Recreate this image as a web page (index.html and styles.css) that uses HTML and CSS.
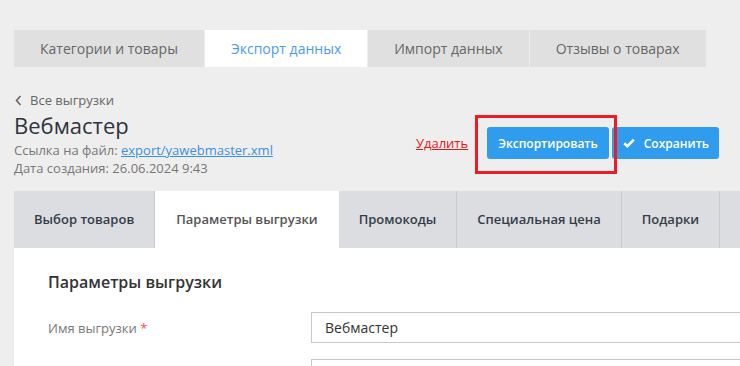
FILE: index.html
```html
<!DOCTYPE html>
<html lang="ru">
	<head>
		<title>Вебмастер - Экспорт данных</title>
		<meta charset="utf-8">
		<link rel="stylesheet" href="styles.css">
	</head>
	<body>
	<div class="page">
		<nav class="top-tabs">
			<a class="top-tab">Категории и товары</a>
			<a class="top-tab active">Экспорт данных</a>
			<a class="top-tab">Импорт данных</a>
			<a class="top-tab">Отзывы о товарах</a>
		</nav>

		<div class="head">
			<div class="head-info">
				<a class="back-link">
					<svg width="7" height="11" viewBox="0 0 7 11"><path d="M5.5 1 L1.5 5.5 L5.5 10" fill="none" stroke="#666" stroke-width="1.6"/></svg>
					Все выгрузки
				</a>
				<h1>Вебмастер</h1>
				<p class="meta">Ссылка на файл: <a class="file-link">export/yawebmaster.xml</a></p>
				<p class="meta">Дата создания: 26.06.2024 9:43</p>
			</div>
			<div class="head-actions">
				<a class="delete-link">Удалить</a>
				<span class="highlight">
					<button type="button" class="btn">Экспортировать</button>
				</span>
				<button type="button" class="btn btn-save">
					<svg width="12" height="10" viewBox="0 0 12 10"><path d="M1.2 5.2 L4.4 8.2 L10.8 1.6" fill="none" stroke="#fff" stroke-width="2.6"/></svg>
					Сохранить
				</button>
			</div>
		</div>

		<div class="card">
			<nav class="sub-tabs">
				<a class="sub-tab">Выбор товаров</a>
				<a class="sub-tab active">Параметры выгрузки</a>
				<a class="sub-tab">Промокоды</a>
				<a class="sub-tab">Специальная цена</a>
				<a class="sub-tab">Подарки</a>
				<a class="sub-tab">Дополнительно</a>
			</nav>

			<div class="card-body">
				<h2>Параметры выгрузки</h2>
				<div class="form-row">
					<label for="export-name">Имя выгрузки <span class="required">*</span></label>
					<input type="text" id="export-name" value="Вебмастер">
				</div>
				<div class="form-row">
					<label for="export-file">Файл выгрузки</label>
					<input type="text" id="export-file" value="">
				</div>
			</div>
		</div>
	</div>
	</body>
</html>
```

FILE: styles.css
```css
body {
	margin: 0;
	background-color: #eeeeee;
	font-family: 'Open Sans', sans-serif;
	color: #333;
	overflow: hidden;
}

a {
	text-decoration: none;
	cursor: pointer;
}

.page {
	padding: 30px 0 0 14px;
}

/*Top tabs*/
.top-tabs {
	display: flex;
	gap: 1px;
}

.top-tab {
	height: 37px;
	line-height: 37px;
	padding: 0 26px;
	background-color: #e0e0e0;
	color: #666;
	font-size: 14px;
	white-space: nowrap;
}

.top-tab.active {
	background-color: #fff;
	color: #4a9be8;
}

/*Header*/
.head {
	display: flex;
	justify-content: space-between;
	align-items: flex-start;
	margin-top: 24px;
	padding-right: 21px;
}

.back-link {
	display: flex;
	align-items: center;
	gap: 8px;
	font-size: 13px;
	line-height: 18px;
	color: #666;
	padding-left: 1px;
}

h1 {
	margin: 0;
	font-size: 22px;
	font-weight: normal;
	line-height: 32px;
	color: #2d3440;
}

.meta {
	margin: 0;
	font-size: 13px;
	line-height: 18px;
	color: #777;
}

.file-link {
	color: #3d8fe0;
	text-decoration: underline;
}

.head-actions {
	display: flex;
	align-items: center;
	margin-top: 36px;
}

.delete-link {
	color: #e8141c;
	font-size: 13px;
	text-decoration: underline;
	margin-right: 19px;
}

.highlight {
	position: relative;
	display: flex;
}

.highlight::after {
	content: "";
	position: absolute;
	left: -12px;
	right: -8px;
	top: -12px;
	bottom: -15px;
	border: 3px solid #ed1c24;
}

.btn {
	height: 32px;
	padding: 0 11px;
	border: none;
	border-radius: 3px;
	background-color: #2f9ced;
	color: #fff;
	font-family: 'Open Sans', sans-serif;
	font-size: 12px;
	font-weight: 600;
	cursor: pointer;
}

.btn-save {
	display: flex;
	align-items: center;
	gap: 9px;
	margin-left: 3px;
	padding: 0 10px 0 11px;
}

/*Card with sub tabs*/
.card {
	margin-top: 14px;
	width: 900px;
}

.sub-tabs {
	display: flex;
	background-color: #dcdde0;
}

.sub-tab {
	height: 57px;
	line-height: 57px;
	padding: 0 20px;
	border-right: 1px solid #c9cacd;
	color: #333d4a;
	font-size: 13px;
	font-weight: 600;
	white-space: nowrap;
}

.sub-tab.active {
	background-color: #fff;
	color: #555;
	padding: 0 21px;
	border-right: none;
}

.card-body {
	background-color: #fff;
	padding: 22px 34px 40px;
}

h2 {
	margin: 0 0 18px;
	font-size: 16px;
	font-weight: 600;
	line-height: 24px;
	color: #333;
}

.form-row {
	display: flex;
	align-items: center;
	margin-bottom: 16px;
}

.form-row label {
	width: 263px;
	font-size: 13px;
	color: #777;
}

.required {
	color: #f0504f;
}

.form-row input {
	flex: 1;
	height: 31px;
	box-sizing: border-box;
	padding: 0 13px;
	border: 1px solid #c8c8c8;
	font-family: 'Open Sans', sans-serif;
	font-size: 14px;
	color: #333;
}
```
